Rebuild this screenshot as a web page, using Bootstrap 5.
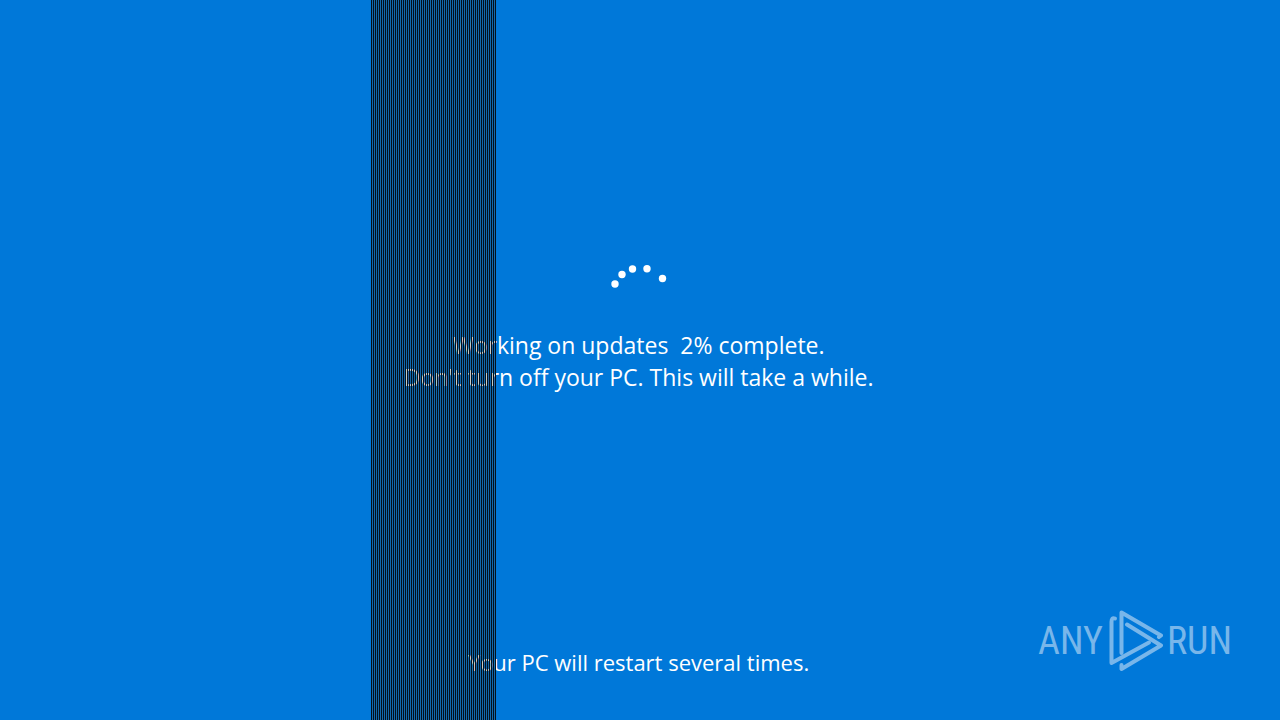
<!DOCTYPE html>
<html lang="en">
<head>
<meta charset="utf-8">
<meta name="viewport" content="width=device-width, initial-scale=1">
<title>Working on updates</title>
<link href="https://cdn.jsdelivr.net/npm/bootstrap@5.3.0/dist/css/bootstrap.min.css" rel="stylesheet">
<style>
  body { background: #0078d9; color: #fff; font-family: "Open Sans", "Noto Sans", sans-serif; }
  .update-screen { display: grid; grid-template-rows: 1fr auto 1fr; font-size: 23px; line-height: 32px; }
  .update-status { padding-bottom: 62px; padding-right: 3px; }
  .status-gap { white-space: pre; }
  .spinner-dots { width: 64px; height: 64px; }
  .restart-note { padding-bottom: 42px; padding-right: 3px; font-size: 22px; }
  /* striped band across the full height of the screen */
  .stripe-band { left: 29%; width: 125px; background: repeating-linear-gradient(90deg, #04101c 0 1px, rgba(64, 64, 56, .28) 1px 2px); }
  .brand-mark { right: 48px; bottom: 47px; color: #78b6ea; font-family: "Roboto Condensed", Roboto, sans-serif; font-weight: 400; font-size: 38px; line-height: 64px; gap: 4px; }
  .brand-mark svg { width: 56px; height: 64px; }
</style>
</head>
<body>
<main class="update-screen position-relative min-vh-100 text-center overflow-hidden">
  <div></div>
  <section class="update-status" role="status">
    <svg class="spinner-dots d-block mx-auto" viewBox="0 0 64 64" fill="#fff" aria-hidden="true">
      <circle cx="8" cy="19" r="3.700"/><circle cx="15" cy="9.500" r="3.700"/><circle cx="25.500" cy="4" r="3.700"/><circle cx="40" cy="3.700" r="3.700"/><circle cx="55.500" cy="13.500" r="3.700"/>
    </svg>
    <p class="status-gap mb-0">Working on updates  2% complete.</p>
    <p class="mb-0">Don't turn off your PC. This will take a while.</p>
  </section>
  <p class="restart-note mb-0 align-self-end">Your PC will restart several times.</p>
  <div class="stripe-band position-absolute top-0 bottom-0"></div>
  <div class="brand-mark position-absolute d-flex align-items-center">
    <span>ANY</span>
    <svg viewBox="-2 1 56 64" fill="none" stroke="currentColor" stroke-width="4" stroke-linecap="round" stroke-linejoin="round" aria-hidden="true">
      <path d="M6 10.500Q2.500 9 2.500 14V55L40 34.500"/>
      <path d="M12.500 45V4.500L52 27.500L50 29"/>
      <path d="M18 16.500 52 37.500 12.500 61V57"/>
    </svg>
    <span>RUN</span>
  </div>
</main>
<script src="https://cdn.jsdelivr.net/npm/bootstrap@5.3.0/dist/js/bootstrap.bundle.min.js"></script>
</body>
</html>
